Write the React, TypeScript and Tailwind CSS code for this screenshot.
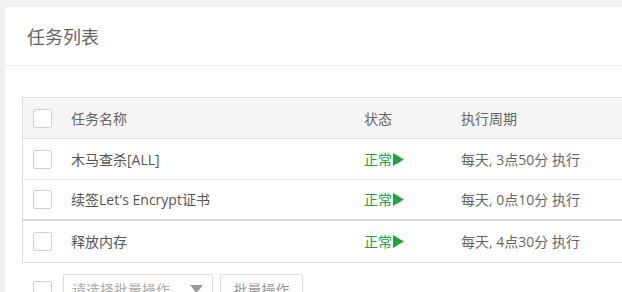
const font = { fontFamily: '"Open Sans", "Noto Sans CJK SC", sans-serif' };

const tasks = [
  { name: "木马查杀[ALL]", cycle: "每天, 3点50分 执行" },
  { name: "续签Let's Encrypt证书", cycle: "每天, 0点10分 执行" },
  { name: "释放内存", cycle: "每天, 4点30分 执行" },
];

function Box() {
  return <span className="block h-[19px] w-[19px] rounded-[2px] border border-[#d0d0d0] bg-white" />;
}

function Play() {
  return (
    <svg width="11" height="13" viewBox="0 0 11 13" className="ml-[1px]">
      <polygon points="0,0 11,6.5 0,13" fill="#20a53a" />
    </svg>
  );
}

export default function App() {
  return (
    <div className="h-[292px] w-[622px] overflow-hidden bg-[#f0f0f0] pl-[5px] pt-[7px]" style={font}>
      <div className="w-[800px] rounded-[4px] bg-white">
        <div className="flex h-[59px] items-center border-b border-[#ececec] px-[22px] pt-[2px] text-[18px] text-[#666]">
          任务列表
        </div>
        <div className="px-[17px] pt-[31px]">
          <div className="w-[760px] border border-[#ddd] text-[14px]">
            <div className="grid h-[41px] grid-cols-[38px_293px_97px_1fr] items-center border-b border-[#e4e4e4] bg-[#f5f5f5] text-[#666]">
              <div className="pl-[10px]"><Box /></div>
              <div className="pl-[10px]">任务名称</div>
              <div className="pl-[10px]">状态</div>
              <div className="pl-[10px]">执行周期</div>
            </div>
            {tasks.map((t, i) => (
              <div
                key={t.name}
                className={
                  "grid h-[41px] grid-cols-[38px_293px_97px_1fr] items-center text-[#555] " +
                  (i === 1 ? "border-b-2 border-[#ddd]" : i === 0 ? "border-b border-[#e4e4e4]" : "")
                }
              >
                <div className="pl-[10px]"><Box /></div>
                <div className="pl-[10px]">{t.name}</div>
                <div className="flex items-center pl-[10px] text-[#20a53a]">
                  正常
                  <Play />
                </div>
                <div className="pl-[10px] text-[#666]">{t.cycle}</div>
              </div>
            ))}
          </div>
          <div className="flex items-start pt-[11px] text-[14px]">
            <div className="pl-[11px] pt-[7px] pr-[11px]"><Box /></div>
            <div className="flex h-[30px] w-[150px] items-center justify-between rounded-[2px] border border-[#ddd] pl-[8px] pr-[9px] text-[#aaa]">
              请选择批量操作
              <svg width="13" height="8" viewBox="0 0 13 8">
                <polygon points="0,0 13,0 6.5,8" fill="#999" />
              </svg>
            </div>
            <div className="ml-[7px] flex h-[30px] w-[83px] items-center justify-center rounded-[2px] border border-[#ddd] text-[#999]">
              批量操作
            </div>
          </div>
        </div>
      </div>
    </div>
  );
}
